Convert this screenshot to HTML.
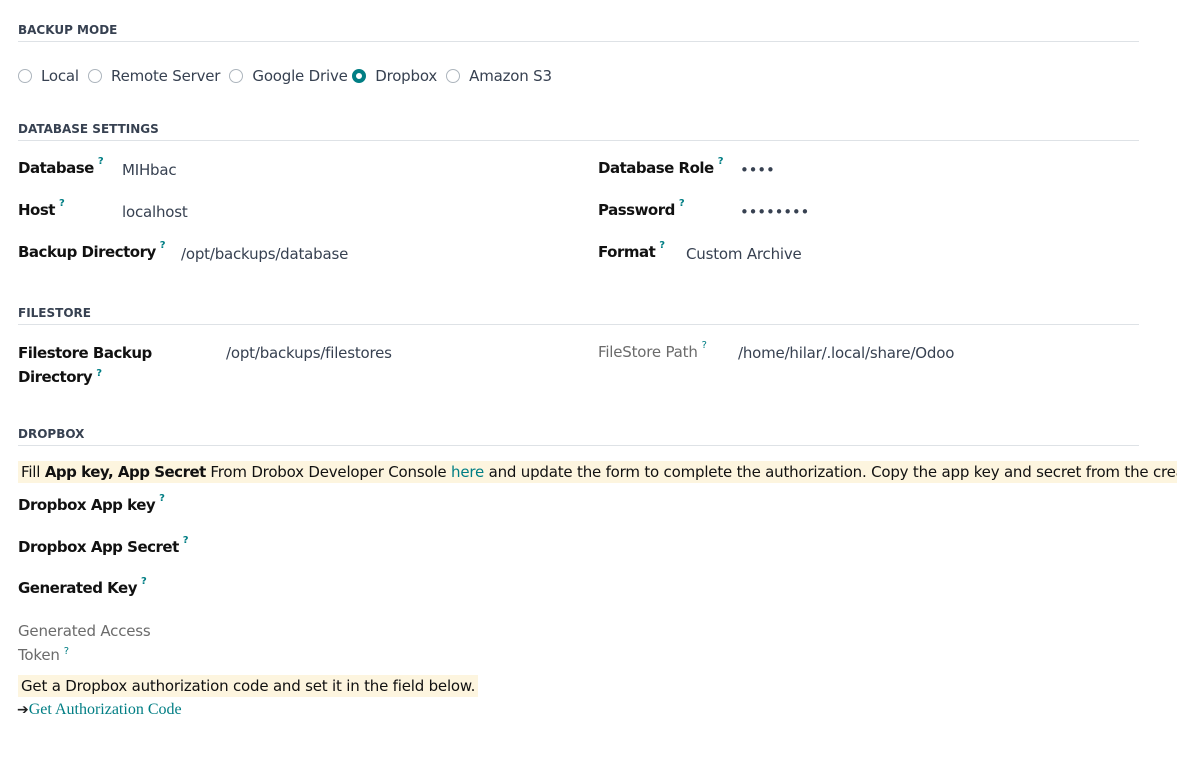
<!DOCTYPE html>
<html><head><meta charset="utf-8"><style>
body{margin:0;width:1177px;height:760px;overflow:hidden;background:#fff;font-family:"DejaVu Sans","Liberation Sans",sans-serif;font-size:15px;color:#212529;position:relative;letter-spacing:-0.2px}
.a{position:absolute;white-space:nowrap}
.h{position:absolute;left:18px;font-size:12px;font-weight:bold;color:#374151;letter-spacing:0}
.ln{position:absolute;left:18px;width:1121px;height:1px;background:#dee2e6}
.b{font-weight:bold;color:#111;letter-spacing:-0.5px}
.q{color:#017e84;font-size:10px;vertical-align:top;position:relative;top:-3px;margin-left:4px;font-weight:bold}
.v{color:#374151}
.r{display:inline-block;width:14px;height:14px;border:1px solid #adb5bd;border-radius:50%;vertical-align:-2px;margin-right:9px;box-sizing:border-box}
.r.on{border:4px solid #017e84;background:#fff}
.hl{background:#fdf5df;padding:2px 3px}
.m{color:#6b6b6b}
</style></head><body>
<div class="h" style="top:23px">BACKUP MODE</div><div class="ln" style="top:41px"></div>
<div class="a" style="left:18px;top:67px;color:#374151">
<span class="r"></span>Local&nbsp;&nbsp;<span class="r"></span>Remote Server&nbsp;&nbsp;<span class="r"></span>Google Drive&nbsp;<span class="r on"></span>Dropbox&nbsp;&nbsp;<span class="r"></span>Amazon S3</div>

<div class="h" style="top:122px">DATABASE SETTINGS</div><div class="ln" style="top:140px"></div>
<div class="a b" style="left:18px;top:159px">Database<span class="q">?</span></div><div class="a v" style="left:122px;top:161px">MIHbac</div>
<div class="a b" style="left:18px;top:201px">Host<span class="q">?</span></div><div class="a v" style="left:122px;top:203px">localhost</div>
<div class="a b" style="left:18px;top:243px">Backup Directory<span class="q">?</span></div><div class="a v" style="left:181px;top:245px">/opt/backups/database</div>
<div class="a b" style="left:598px;top:159px">Database Role<span class="q">?</span></div><div class="a v" style="left:740px;top:161px">••••</div>
<div class="a b" style="left:598px;top:201px">Password<span class="q">?</span></div><div class="a v" style="left:740px;top:203px">••••••••</div>
<div class="a b" style="left:598px;top:243px">Format<span class="q">?</span></div><div class="a v" style="left:686px;top:245px">Custom Archive</div>

<div class="h" style="top:306px">FILESTORE</div><div class="ln" style="top:324px"></div>
<div class="a b" style="left:18px;top:341px;line-height:24px">Filestore Backup<br>Directory<span class="q">?</span></div>
<div class="a v" style="left:226px;top:344px">/opt/backups/filestores</div>
<div class="a m" style="left:598px;top:343px">FileStore Path<span class="q" style="font-weight:normal">?</span></div>
<div class="a v" style="left:738px;top:344px">/home/hilar/.local/share/Odoo</div>

<div class="h" style="top:427px">DROPBOX</div><div class="ln" style="top:445px"></div>
<div class="a hl" style="left:18px;top:461px;width:1160px;color:#111">Fill <b style="letter-spacing:-0.5px">App key, App Secret</b> From Drobox Developer Console <span style="color:#017e84">here</span> and update the form to complete the authorization. Copy the app key and secret from the created app</div>
<div class="a b" style="left:18px;top:496px">Dropbox App key<span class="q">?</span></div>
<div class="a b" style="left:18px;top:538px">Dropbox App Secret<span class="q">?</span></div>
<div class="a b" style="left:18px;top:579px">Generated Key<span class="q">?</span></div>
<div class="a m" style="left:18px;top:619px;line-height:24px">Generated Access<br>Token<span class="q" style="font-weight:normal">?</span></div>
<div class="a hl" style="left:18px;top:675px;color:#111">Get a Dropbox authorization code and set it in the field below.</div>
<div class="a" style="left:17px;top:701px;font-family:'Liberation Serif',serif;font-size:16px;color:#017e84;letter-spacing:0"><span style="color:#222;font-weight:bold;font-family:'DejaVu Sans',sans-serif;font-size:14px">➔</span>Get Authorization Code</div>
</body></html>
